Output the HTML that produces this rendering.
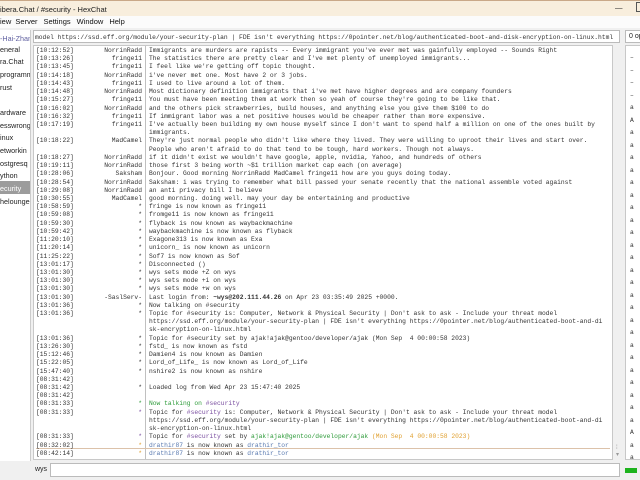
<!DOCTYPE html>
<html><head><meta charset="utf-8"><style>
*{margin:0;padding:0;box-sizing:border-box}
body{width:640px;height:480px;overflow:hidden;background:#f0f0f0;font-family:"Liberation Sans",sans-serif;position:relative}
.title{position:absolute;left:0;top:0;width:640px;height:16px;background:#f8eedd;border-top:1px solid #c9a888;font-size:7.5px;color:#222;padding:4px 0 0 0}
.menu{position:absolute;left:0;top:16px;width:640px;height:12px;background:#fbfbfb;font-size:7.5px;color:#111;padding-top:1px}
.menu span{margin-right:6px}
.topic{position:absolute;left:33px;top:30px;width:587px;height:13px;background:#fff;border:1px solid #bbb;font:6.3px "Liberation Mono",monospace;color:#333;padding:3px 0 0 1px;white-space:pre;overflow:hidden}
.ops{position:absolute;left:625px;top:30px;width:20px;height:13px;background:#fff;border:1px solid #bbb;font-size:7px;padding:2px 0 0 3px;color:#222}
.tree{position:absolute;left:0;top:30px;width:31px;height:431px;background:#fff;border-right:1px solid #ccc;font-size:7.2px;color:#222;overflow:hidden}
.tree div{position:absolute;left:0;white-space:nowrap}
.chat{position:absolute;left:33px;top:45px;width:580px;height:415px;background:#fff;border:1px solid #c8c8c8;font:6.3px "Liberation Mono",monospace;color:#333;overflow:hidden}
.sep{position:absolute;left:111px;top:0;width:1px;height:415px;background:#c0c0c0}
.ln{position:absolute;left:2px;height:8.22px;line-height:8.22px;white-space:pre;width:576px}
.ts{position:absolute;left:0}
.nk{position:absolute;right:470px;text-align:right}
.ms{position:absolute;left:113px}
.sb{position:absolute;left:613px;top:45px;width:9px;height:415px;background:#f0f0f0}
.ul{position:absolute;left:625px;top:45px;width:20px;height:415px;background:#fff;border:1px solid #c8c8c8;font:6.3px "Liberation Mono",monospace;color:#333}
.inp{position:absolute;left:50px;top:463px;width:570px;height:14px;background:#fff;border:1px solid #bbb}
.g{color:#2e9b3a}.p{color:#7a4ea0}.o{color:#e0a030}.b{color:#5a7ab0}
</style></head><body>
<div class="title">ibera.Chat / #security - HexChat<span style="position:absolute;left:615px;top:2px">—</span><span style="position:absolute;left:636px;top:1px;width:6px;height:10px;border:1px solid #555"></span></div>
<div class="menu">iew &nbsp;<span>Server</span><span>Settings</span><span>Window</span><span>Help</span></div>
<div class="topic">model https://ssd.eff.org/module/your-security-plan | FDE isn't everything https://0pointer.net/blog/authenticated-boot-and-disk-encryption-on-linux.html</div>
<div class="ops">0 op</div>
<div class="tree">
<div style="top:4px;color:#6060a0">-Hai-Zhan</div>
<div style="top:15px">eneral</div>
<div style="top:27px">ra.Chat</div>
<div style="top:40px">programm</div>
<div style="top:53px">rust</div>
<div style="top:78px">ardware</div>
<div style="top:91px">esswrong</div>
<div style="top:103px">inux</div>
<div style="top:116px">etworkin</div>
<div style="top:129px">ostgresq</div>
<div style="top:141px">ython</div>
<div style="top:151px;width:31px;height:13px;background:#9c9c9c;color:#fff;padding-top:3px">ecurity</div>
<div style="top:167px">helounge</div>
</div>
<div class="chat"><div class="sep"></div>
<div style="position:absolute;left:2px;top:402px;width:574px;height:1px;background:#dcc2aa"></div>
<div id="lines"></div>
</div>
<div class="sb"><div style="position:absolute;left:3px;top:400px;font-size:6px;color:#999">⁞<br>▾</div></div>
<div class="ul">
<div style="position:absolute;left:4px;top:6px;line-height:12.5px">–<br>–<br>–<br>–<br>a<br>A<br>a<br>a<br>a<br>a<br>a<br>a<br>a<br>a<br>a<br>a<br>a<br>a<br>a<br>a<br>a<br>a<br>a<br>a<br>a<br>a<br>a<br>a<br>a<br>a<br>A<br>a<br>a</div>
</div>
<div style="position:absolute;left:35px;top:466px;font-size:7px;color:#222">wys</div>
<div class="inp"></div>
<div style="position:absolute;left:625px;top:468px;width:12px;height:5px;background:#1db31d"></div>
<script>
var L=[
["[10:12:52]","NorrinRadd","Immigrants are murders are rapists -- Every immigrant you've ever met was gainfully employed -- Sounds Right"],
["[10:13:26]","fringe11","The statistics there are pretty clear and I've met plenty of unemployed immigrants..."],
["[10:13:45]","fringe11","I feel like we're getting off topic thought."],
["[10:14:18]","NorrinRadd","i've never met one. Most have 2 or 3 jobs."],
["[10:14:43]","fringe11","I used to live around a lot of them."],
["[10:14:48]","NorrinRadd","Most dictionary definition immigrants that i've met have higher degrees and are company founders"],
["[10:15:27]","fringe11","You must have been meeting them at work then so yeah of course they're going to be like that."],
["[10:16:02]","NorrinRadd","and the others pick strawberries, build houses, and anything else you give them $100 to do"],
["[10:16:32]","fringe11","If immigrant labor was a net positive houses would be cheaper rather than more expensive."],
["[10:17:19]","fringe11","I've actually been building my own house myself since I don't want to spend half a million on one of the ones built by"],
["","","immigrants."],
["[10:18:22]","MadCamel","They're just normal people who didn't like where they lived. They were willing to uproot their lives and start over."],
["","","People who aren't afraid to do that tend to be tough, hard workers. Though not always."],
["[10:18:27]","NorrinRadd","if it didn't exist we wouldn't have google, apple, nvidia, Yahoo, and hundreds of others"],
["[10:19:11]","NorrinRadd","those first 3 being worth ~$1 trillion market cap each (on average)"],
["[10:28:06]","Saksham","Bonjour. Good morning NorrinRadd MadCamel fringe11 how are you guys doing today."],
["[10:28:54]","NorrinRadd","Saksham: i was trying to remember what bill passed your senate recently that the national assemble voted against"],
["[10:29:08]","NorrinRadd","an anti privacy bill I believe"],
["[10:30:55]","MadCamel","good morning. doing well. may your day be entertaining and productive"],
["[10:58:59]","*","fringe is now known as fringe11"],
["[10:59:08]","*","fromge11 is now known as fringe11"],
["[10:59:30]","*","flyback is now known as waybackmachine"],
["[10:59:42]","*","waybackmachine is now known as flyback"],
["[11:20:10]","*","Exagone313 is now known as Exa"],
["[11:20:14]","*","unicorn_ is now known as unicorn"],
["[11:25:22]","*","Sof7 is now known as Sof"],
["[13:01:17]","*","Disconnected ()"],
["[13:01:30]","*","wys sets mode +Z on wys"],
["[13:01:30]","*","wys sets mode +i on wys"],
["[13:01:30]","*","wys sets mode +w on wys"],
["[13:01:30]","-SaslServ-","Last login from: <b>~wys@202.111.44.26</b> on Apr 23 03:35:49 2025 +0000."],
["[13:01:36]","*","Now talking on #security"],
["[13:01:36]","*","Topic for #security is: Computer, Network &amp; Physical Security | Don't ask to ask - Include your threat model"],
["","","https://ssd.eff.org/module/your-security-plan | FDE isn't everything https://0pointer.net/blog/authenticated-boot-and-di"],
["","","sk-encryption-on-linux.html"],
["[13:01:36]","*","Topic for #security set by ajak!ajak@gentoo/developer/ajak (Mon Sep  4 00:00:58 2023)"],
["[13:26:30]","*","fstd_ is now known as fstd"],
["[15:12:46]","*","Damien4 is now known as Damien"],
["[15:22:05]","*","Lord_of_Life_ is now known as Lord_of_Life"],
["[15:47:40]","*","nshire2 is now known as nshire"],
["[08:31:42]","",""],
["[08:31:42]","*","Loaded log from Wed Apr 23 15:47:40 2025"],
["[08:31:42]","",""],
["[08:31:33]","<span class=g>*</span>","<span class=g>Now talking on</span> <span class=p>#security</span>"],
["[08:31:33]","<span class=p>*</span>","Topic for <span class=p>#security</span> is: Computer, Network &amp; Physical Security | Don't ask to ask - Include your threat model"],
["","","https://ssd.eff.org/module/your-security-plan | FDE isn't everything https://0pointer.net/blog/authenticated-boot-and-di"],
["","","sk-encryption-on-linux.html"],
["[08:31:33]","<span class=p>*</span>","Topic for <span class=p>#security</span> set by <span class=g>ajak!ajak@gentoo/developer/ajak</span> <span class=o>(Mon Sep  4 00:00:58 2023)</span>"],
["[08:32:02]","<span class=o>*</span>","<span class=b>drathir87</span> is now known as <span class=b>drathir_tor</span>"],
["[08:42:14]","<span class=o>*</span>","<span class=b>drathir87</span> is now known as <span class=b>drathir_tor</span>"]
];
var h="";for(var i=0;i<L.length;i++){var t=1+i*8.22;h+='<div class="ln" style="top:'+t+'px"><span class="ts">'+L[i][0]+'</span><span class="nk">'+L[i][1]+'</span><span class="ms">'+L[i][2]+'</span></div>';}
document.getElementById("lines").innerHTML=h;
</script>
</body></html>
